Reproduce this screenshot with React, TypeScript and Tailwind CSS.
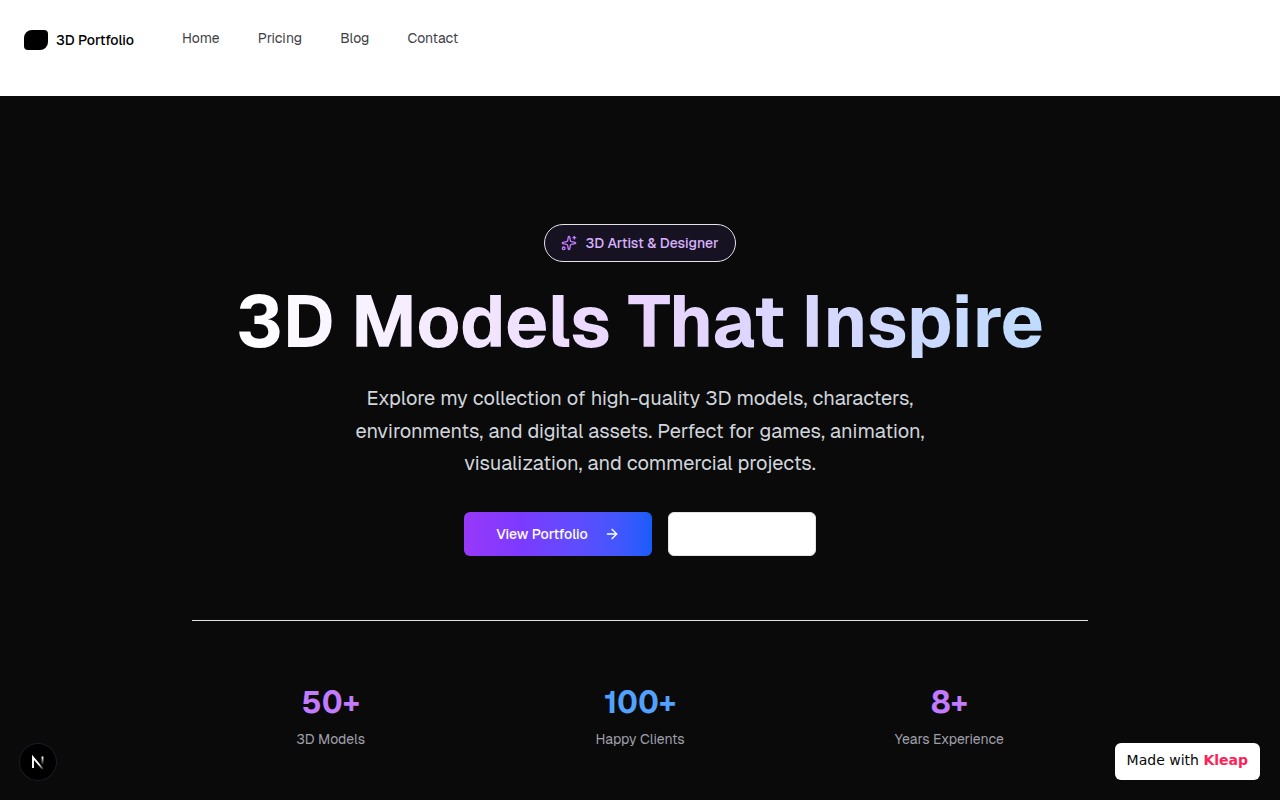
import { ArrowRight, Sparkles } from "lucide-react";

const navLinks = ["Home", "Pricing", "Blog", "Contact"];

const stats = [
  { value: "50+", label: "3D Models", color: "text-purple-400" },
  { value: "100+", label: "Happy Clients", color: "text-blue-400" },
  { value: "8+", label: "Years Experience", color: "text-purple-400" },
];

const Header = () => (
  <header className="flex h-24 items-start gap-12 bg-white px-6 pt-7">
    <a href="#" className="flex h-6 items-center gap-2">
      <span className="h-5 w-6 rounded-tl-lg rounded-tr-sm rounded-br-lg rounded-bl-sm bg-black" />
      <span className="text-sm font-medium text-black">3D Portfolio</span>
    </a>
    <nav className="flex gap-[38px]">
      {navLinks.map((link) => (
        <a key={link} href="#" className="text-sm text-zinc-700">
          {link}
        </a>
      ))}
    </nav>
  </header>
);

const Hero = () => (
  <section className="flex flex-1 flex-col items-center bg-[#0a0a0a] px-6 pt-32 pb-12 text-center">
    <div className="flex h-[38px] items-center gap-2 rounded-full border border-zinc-200 bg-[#171221] px-4 text-sm font-medium text-purple-300">
      <Sparkles className="size-4 text-purple-400" />
      3D Artist &amp; Designer
    </div>

    <h1 className="mt-6 bg-gradient-to-r from-white via-purple-200 to-blue-200 bg-clip-text text-7xl font-bold text-transparent">
      3D Models That Inspire
    </h1>

    <p className="mt-6 max-w-2xl text-xl leading-relaxed text-gray-300">
      Explore my collection of high-quality 3D models, characters,
      environments, and digital assets. Perfect for games, animation,
      visualization, and commercial projects.
    </p>

    <div className="mt-8 flex gap-4">
      <button className="flex h-11 items-center gap-4 rounded-md bg-gradient-to-r from-[#9838fa] via-[#7c3aff] via-30% to-blue-600 px-8 text-sm font-medium text-white">
        View Portfolio
        <ArrowRight className="size-4" />
      </button>
      <button
        aria-label="Get in touch"
        className="h-11 w-[148px] rounded-md border border-zinc-200 bg-white"
      />
    </div>

    <div className="mt-16 grid w-full max-w-4xl grid-cols-3 gap-8 border-t border-zinc-200 pt-16">
      {stats.map((stat) => (
        <div key={stat.label}>
          <div className={`text-3xl leading-9 font-bold ${stat.color}`}>
            {stat.value}
          </div>
          <div className="mt-2 text-sm text-zinc-400">{stat.label}</div>
        </div>
      ))}
    </div>
  </section>
);

const DevBadge = () => (
  <button
    aria-label="Open developer tools"
    className="fixed bottom-5 left-5 flex size-9 items-center justify-center rounded-full bg-black ring-1 ring-[#1d1c26]"
  >
    <svg width="36" height="36" viewBox="0 0 36 36" fill="none">
      <defs>
        <linearGradient id="diagonal" x1="19" y1="20" x2="24" y2="26" gradientUnits="userSpaceOnUse">
          <stop stopColor="white" />
          <stop offset="1" stopColor="white" stopOpacity="0" />
        </linearGradient>
        <linearGradient id="stem" x1="22" y1="13" x2="22" y2="21" gradientUnits="userSpaceOnUse">
          <stop stopColor="white" />
          <stop offset="1" stopColor="white" stopOpacity="0" />
        </linearGradient>
      </defs>
      <path d="M13 24V13.4L22.8 25" stroke="url(#diagonal)" strokeWidth="1.9" />
      <path d="M22.5 12.5V21" stroke="url(#stem)" strokeWidth="1.9" />
    </svg>
  </button>
);

const App = () => {
  return (
    <div className="flex min-h-screen flex-col font-['Geist','Inter',sans-serif]">
      <Header />
      <Hero />
      <DevBadge />
      <a
        href="#"
        className="fixed right-5 bottom-5 rounded-md bg-white px-3 pt-[7px] pb-2.5 font-['DejaVu_Sans',sans-serif] text-sm text-zinc-950"
      >
        Made with <span className="font-bold text-rose-500">Kleap</span>
      </a>
    </div>
  );
};

export default App;
